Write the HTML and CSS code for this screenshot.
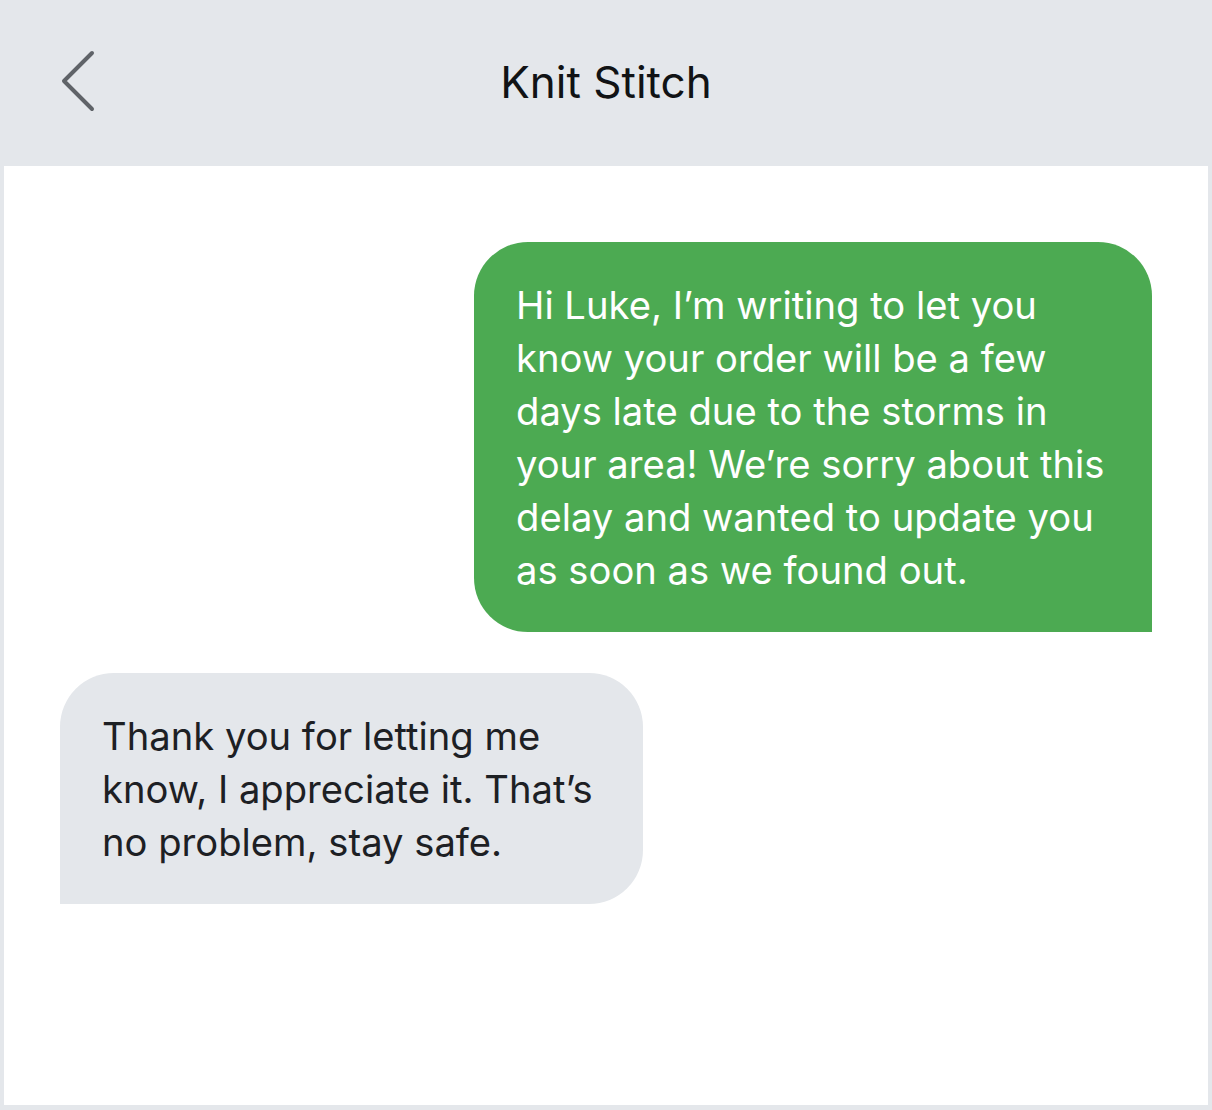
FILE: index.html
```html
<!DOCTYPE html>
<html lang="en">
<head>
<meta charset="utf-8">
<title>Knit Stitch</title>
<link rel="stylesheet" href="styles.css">
</head>
<body>
<div class="app">
  <header class="topbar">
    <button class="back" aria-label="Back">
      <svg width="40" height="64" viewBox="0 0 40 64" fill="none">
        <path d="M31 5 L3 33 L31 61" stroke="#5f6368" stroke-width="4" stroke-linecap="round" stroke-linejoin="round"/>
      </svg>
    </button>
    <h1 class="title">Knit Stitch</h1>
  </header>
  <main class="thread">
    <div class="bubble sent">Hi Luke, I’m writing to let you know your order will be a few days late due to the storms in your area! We’re sorry about this delay and wanted to update you as soon as we found out.</div>
    <div class="bubble received">Thank you for letting me know, I appreciate it. That’s no problem, stay safe.</div>
  </main>
</div>
</body>
</html>
```
FILE: styles.css
```css
* { box-sizing: border-box; }
html, body {
  margin: 0;
  padding: 0;
  background: #e4e7eb;
  font-family: Inter, "Noto Sans", "Liberation Sans", sans-serif;
}
.app {
  width: 1212px;
  height: 1110px;
  display: flex;
  flex-direction: column;
}
.topbar {
  height: 166px;
  flex: none;
  display: flex;
  align-items: center;
  justify-content: center;
  position: relative;
}
.back {
  position: absolute;
  left: 61px;
  top: 48px;
  padding: 0;
  border: 0;
  background: none;
  width: 40px;
  height: 64px;
}
.back svg { display: block; }
.title {
  margin: 0;
  font-size: 44px;
  font-weight: 400;
  color: #111315;
  letter-spacing: 0;
  padding-bottom: 2px;
}
.thread {
  flex: 1;
  background: #ffffff;
  margin: 0 4px 5px;
  padding: 76px 56px;
  display: flex;
  flex-direction: column;
  gap: 41px;
}
.bubble {
  font-size: 38.2px;
  line-height: 53px;
  padding: 37px 36px 35px 42px;
  letter-spacing: 0;
}
.sent {
  align-self: flex-end;
  width: 678px;
  background: #4caa52;
  color: #ffffff;
  border-radius: 54px 54px 0 54px;
}
.received {
  align-self: flex-start;
  width: 583px;
  background: #e4e7eb;
  color: #1d2024;
  border-radius: 54px 54px 54px 0;
}
```
